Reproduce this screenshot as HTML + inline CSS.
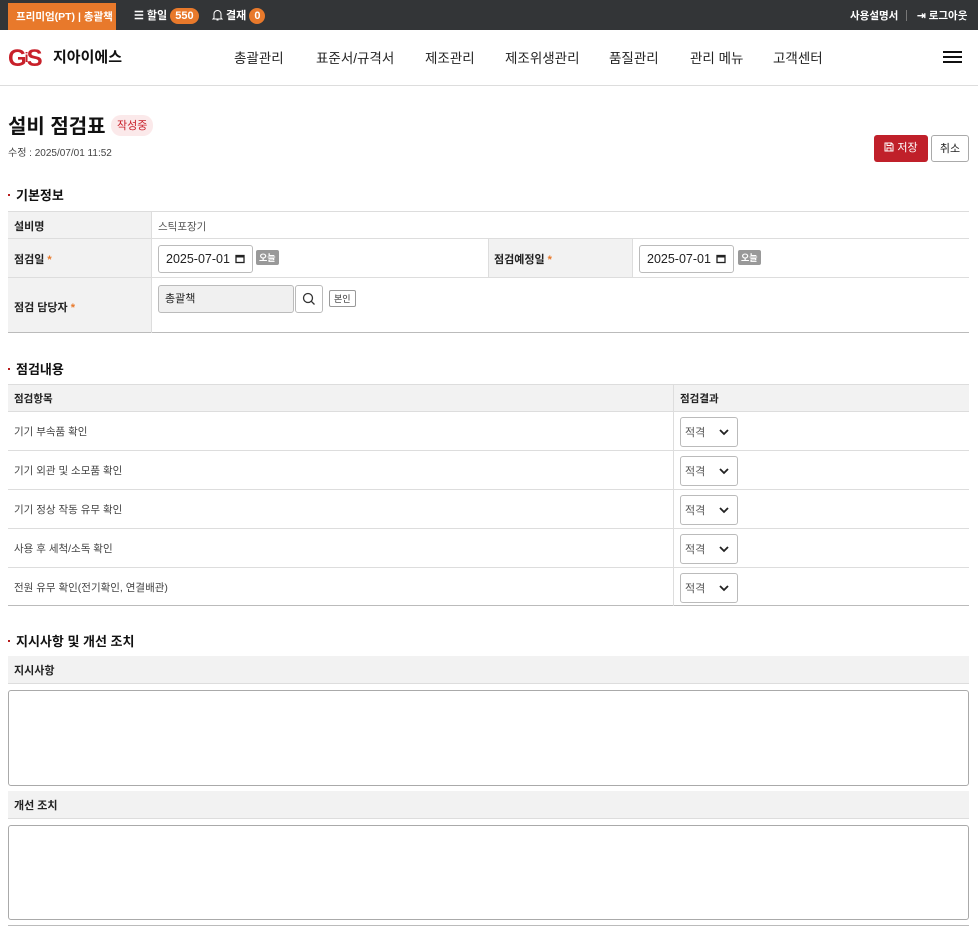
<!DOCTYPE html>
<html><head><meta charset="utf-8"><style>
*{box-sizing:border-box;margin:0;padding:0}
body{width:978px;height:936px;position:relative;background:#fff;font-family:"Liberation Sans","Noto Sans CJK KR",sans-serif;color:#222;overflow:hidden;line-height:1.2}
.a{position:absolute}
.t{margin-top:3px}
.top{left:0;top:0;width:978px;height:30px;background:#333537}
.w{color:#fff;font-size:11px;font-weight:bold}
.badge{display:inline-block;background:#e8792b;color:#fff;border-radius:9px;padding:0 5px;font-size:11px;line-height:16px;font-weight:bold}
.nav{font-size:13.5px;color:#222;top:51px}
.lbl{background:#f2f2f2;font-size:11px;font-weight:bold;color:#222}
.hl{height:1px;background:#ddd;left:8px;width:961px}
.vl{width:1px;background:#ddd}
.sec{font-size:13px;font-weight:bold;color:#111}
.dot{width:2px;height:2px;background:#b71c1c}
.date{border:1px solid #bbb;border-radius:3px;height:28px;font-size:12.5px;padding:0 7px;color:#222;width:95px;font-family:"Liberation Sans",sans-serif;display:flex;align-items:center;justify-content:space-between;white-space:nowrap}
.today{background:#999;color:#fff;font-size:9px;border-radius:2px;padding:3px 3px 1px;font-weight:bold}
.sel{left:680px;width:58px;height:30px;border:1px solid #bbb;border-radius:3px;font-size:11px;color:#555;padding:3px 8px 0 4px;display:flex;align-items:center;justify-content:space-between}
.sel svg{margin-top:-3px}
.item{left:14px;font-size:10.5px;color:#444}
.ta{left:8px;width:961px;border:1px solid #aaa;border-radius:3px}
.star{color:#e8792b}
</style></head><body>
<div class="a top"></div>
<div class="a w" style="left:8px;top:3px;width:108px;height:27px;background:#e8792b;padding-top:8px;padding-left:8px;font-size:10.5px">프리미엄(PT) | 총괄책</div>
<div class="a w" style="left:134px;top:8px">☰ 할일 <span class="badge">550</span></div>
<div class="a w" style="left:212px;top:8px"><svg width="11" height="12" viewBox="0 0 11 12" style="vertical-align:-2px"><path d="M2 9V5a3.5 3.5 0 0 1 7 0v4l1 1H1z M4.5 11h2" stroke="#fff" fill="none"/></svg> 결재 <span class="badge" style="padding:0 5px">0</span></div>
<div class="a w" style="left:850px;top:10px;font-size:10.5px">사용설명서</div>
<div class="a" style="left:906px;top:10px;width:1px;height:11px;background:#777"></div>
<div class="a w" style="left:917px;top:10px;font-size:10.5px">⇥ 로그아웃</div>

<div class="a" style="left:8px;top:44px;font-size:24px;font-weight:900;color:#c8202a;letter-spacing:-2px;font-family:'Liberation Sans',sans-serif;line-height:26px">G<span style="font-size:14px;vertical-align:4px">i</span>S</div>
<div class="a" style="left:53px;top:49px;font-size:15px;font-weight:bold;color:#111">지아이에스</div>
<div class="a nav" style="left:234px">총괄관리</div>
<div class="a nav" style="left:316px">표준서/규격서</div>
<div class="a nav" style="left:425px">제조관리</div>
<div class="a nav" style="left:505px">제조위생관리</div>
<div class="a nav" style="left:609px">품질관리</div>
<div class="a nav" style="left:690px">관리 메뉴</div>
<div class="a nav" style="left:773px">고객센터</div>
<div class="a" style="left:943px;top:51px;width:19px;height:2px;background:#111;box-shadow:0 5px 0 #111,0 10px 0 #111"></div>
<div class="a" style="left:0;top:85px;width:978px;height:1px;background:#ddd"></div>

<div class="a" style="left:8px;top:115px;font-size:20px;font-weight:bold;color:#111">설비 점검표</div>
<div class="a" style="left:111px;top:115px;background:#fbe9ea;color:#c8202a;font-size:11px;padding:5px 6px 3px;border-radius:10px">작성중</div>
<div class="a" style="left:8px;top:148px;font-size:10px;color:#444">수정 : 2025/07/01 11:52</div>
<div class="a" style="left:874px;top:135px;width:54px;height:27px;background:#c0202a;border-radius:3px;color:#fff;font-size:11px;padding-top:7px;text-align:center"><svg width="10" height="10" viewBox="0 0 10 10" style="vertical-align:-1px"><path d="M1 1h6.5L9 2.5V9H1z M3 1v2.5h4V1 M3 9V6h4v3" stroke="#fff" fill="none"/></svg> 저장</div>
<div class="a" style="left:931px;top:135px;width:38px;height:27px;border:1px solid #aaa;border-radius:3px;font-size:11px;padding-top:7px;text-align:center">취소</div>

<div class="a dot" style="left:8px;top:194px"></div>
<div class="a sec" style="left:16px;top:188px">기본정보</div>
<div class="a lbl" style="left:8px;top:211px;width:143px;height:122px"></div>
<div class="a lbl" style="left:488px;top:238px;width:144px;height:39px"></div>
<div class="a hl" style="top:211px"></div>
<div class="a hl" style="top:238px"></div>
<div class="a hl" style="top:277px"></div>
<div class="a hl" style="top:332px;background:#bbb"></div>
<div class="a vl" style="left:151px;top:211px;height:122px"></div>
<div class="a vl" style="left:488px;top:238px;height:39px"></div>
<div class="a vl" style="left:632px;top:238px;height:39px"></div>
<div class="a lbl" style="left:14px;top:221px;background:none">설비명</div>
<div class="a" style="left:158px;top:221px;font-size:10.5px;color:#555">스틱포장기</div>
<div class="a lbl" style="left:14px;top:254px;background:none">점검일 <span class="star">*</span></div>
<div class="a lbl" style="left:494px;top:254px;background:none">점검예정일 <span class="star">*</span></div>
<div class="a lbl" style="left:14px;top:302px;background:none">점검 담당자 <span class="star">*</span></div>
<div class="a date" style="left:158px;top:245px"><span>2025-07-01</span><svg width="10" height="10" viewBox="0 0 10 10"><rect x="1" y="1.5" width="8" height="7" stroke="#222" stroke-width="1.3" fill="none"/><rect x="1" y="1.5" width="8" height="2" fill="#222"/></svg></div>
<div class="a today" style="left:256px;top:250px">오늘</div>
<div class="a date" style="left:639px;top:245px"><span>2025-07-01</span><svg width="10" height="10" viewBox="0 0 10 10"><rect x="1" y="1.5" width="8" height="7" stroke="#222" stroke-width="1.3" fill="none"/><rect x="1" y="1.5" width="8" height="2" fill="#222"/></svg></div>
<div class="a today" style="left:738px;top:250px">오늘</div>
<div class="a" style="left:158px;top:285px;width:136px;height:28px;background:#f0f0f0;border:1px solid #bbb;border-radius:3px;font-size:11px;padding:7px 6px 0">총괄책</div>
<div class="a" style="left:295px;top:285px;width:28px;height:28px;border:1px solid #bbb;border-radius:3px"><svg width="26" height="26" viewBox="0 0 26 26"><circle cx="12" cy="12" r="4.5" stroke="#333" stroke-width="1.3" fill="none"/><path d="M15.3 15.3L18.5 18.5" stroke="#333" stroke-width="1.3"/></svg></div>
<div class="a" style="left:329px;top:290px;border:1px solid #999;border-radius:2px;font-size:9px;padding:3px 4px 1px;color:#333">본인</div>

<div class="a dot" style="left:8px;top:368px"></div>
<div class="a sec" style="left:16px;top:362px">점검내용</div>
<div class="a lbl" style="left:8px;top:384px;width:961px;height:27px"></div>
<div class="a hl" style="top:384px"></div>
<div class="a hl" style="top:411px"></div>
<div class="a hl" style="top:450px"></div>
<div class="a hl" style="top:489px"></div>
<div class="a hl" style="top:528px"></div>
<div class="a hl" style="top:567px"></div>
<div class="a hl" style="top:605px;background:#bbb"></div>
<div class="a vl" style="left:673px;top:384px;height:222px"></div>
<div class="a lbl" style="left:14px;top:393px;background:none;font-size:10.5px">점검항목</div>
<div class="a lbl" style="left:680px;top:393px;background:none;font-size:10.5px">점검결과</div>
<div class="a item" style="top:426px">기기 부속품 확인</div>
<div class="a item" style="top:465px">기기 외관 및 소모품 확인</div>
<div class="a item" style="top:504px">기기 정상 작동 유무 확인</div>
<div class="a item" style="top:543px">사용 후 세척/소독 확인</div>
<div class="a item" style="top:582px">전원 유무 확인(전기확인, 연결배관)</div>
<div class="a sel" style="top:417px"><span>적격</span><svg width="10" height="7"><path d="M1 1l4 4 4-4" stroke="#222" stroke-width="1.8" fill="none"/></svg></div>
<div class="a sel" style="top:456px"><span>적격</span><svg width="10" height="7"><path d="M1 1l4 4 4-4" stroke="#222" stroke-width="1.8" fill="none"/></svg></div>
<div class="a sel" style="top:495px"><span>적격</span><svg width="10" height="7"><path d="M1 1l4 4 4-4" stroke="#222" stroke-width="1.8" fill="none"/></svg></div>
<div class="a sel" style="top:534px"><span>적격</span><svg width="10" height="7"><path d="M1 1l4 4 4-4" stroke="#222" stroke-width="1.8" fill="none"/></svg></div>
<div class="a sel" style="top:573px"><span>적격</span><svg width="10" height="7"><path d="M1 1l4 4 4-4" stroke="#222" stroke-width="1.8" fill="none"/></svg></div>

<div class="a dot" style="left:8px;top:640px"></div>
<div class="a sec" style="left:16px;top:634px">지시사항 및 개선 조치</div>
<div class="a lbl" style="left:8px;top:656px;width:961px;height:28px;border-bottom:1px solid #ddd;padding:9px 6px 0">지시사항</div>
<div class="a ta" style="top:690px;height:96px"></div>
<div class="a lbl" style="left:8px;top:791px;width:961px;height:28px;border-bottom:1px solid #ddd;padding:9px 6px 0">개선 조치</div>
<div class="a ta" style="top:825px;height:95px"></div>
<div class="a hl" style="top:925px;background:#bbb"></div>
</body></html>
